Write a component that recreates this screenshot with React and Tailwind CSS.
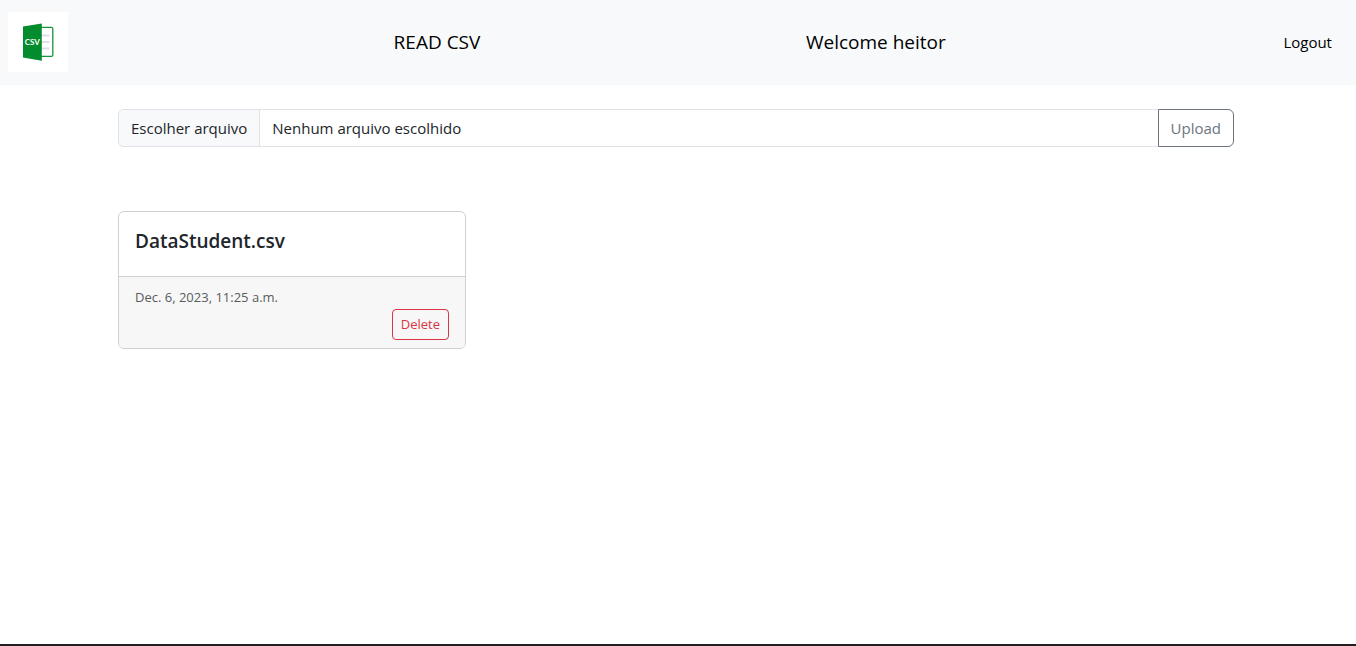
import { useState } from "react";

function CsvLogo() {
  return (
    <svg viewBox="0 0 60 60" className="h-15 w-15" role="img" aria-label="CSV">
      <rect width="60" height="60" fill="#fff" />
      <rect x="28" y="15.4" width="16.8" height="29" rx="1.4" fill="#fff" stroke="#159540" strokeWidth="1.3" />
      <g fill="#dedfe9">
        <rect x="33" y="22.5" width="8.4" height="2" />
        <rect x="33" y="29" width="8.4" height="2" />
        <rect x="33" y="35.5" width="8.4" height="2" />
      </g>
      <path d="M15 14.6 33.8 11.4V48.8L15 45.4Z" fill="#028c2e" />
      <text x="24.2" y="32.8" textAnchor="middle" fontFamily="Lato, sans-serif" fontSize="8" fontWeight="700" fill="#fff">
        CSV
      </text>
    </svg>
  );
}

function Header() {
  return (
    <header className="flex items-center justify-between bg-[#f8f9fb] pt-3 pr-3 pb-[13px] pl-2 text-black">
      <a href="#"><CsvLogo /></a>
      <h1 className="text-[19px]">READ CSV</h1>
      <p className="text-[19px]">Welcome heitor</p>
      <a href="#logout" className="px-3 text-[15px]">Logout</a>
    </header>
  );
}

function UploadForm() {
  const [name, setName] = useState("Nenhum arquivo escolhido");
  return (
    <form className="flex text-[15px]" onSubmit={(e) => e.preventDefault()}>
      <input
        id="csv-file"
        type="file"
        accept=".csv"
        className="sr-only"
        onChange={(e) => setName(e.target.files[0]?.name ?? "Nenhum arquivo escolhido")}
      />
      <label htmlFor="csv-file" className="flex h-[38px] flex-1 overflow-hidden rounded-l-md border border-r-0 border-[#dee2e6] leading-9">
        <span className="border-r border-[#dee2e6] bg-[#f8f9fb] px-3">Escolher arquivo</span>
        <span className="px-3">{name}</span>
      </label>
      <button type="submit" className="h-[38px] rounded-r-md border border-[#6c757d] px-3 text-[#6c757d]">
        Upload
      </button>
    </form>
  );
}

function FileCard({ name, date }) {
  return (
    <article className="overflow-hidden rounded-md border border-[#d0d0d0]">
      <div className="h-16 px-4 pt-4">
        <h2 className="text-[19px] leading-[26px] font-semibold">{name}</h2>
      </div>
      <div className="border-t border-[#d0d0d0] bg-[#f7f7f7] px-4 py-2">
        <p className="text-[13px] leading-6 text-[#595c5f]">{date}</p>
        <div className="flex justify-end">
          <button type="button" className="h-[31px] rounded-sm border border-[#dc3545] px-2 text-[13px] text-[#dc3545]">
            Delete
          </button>
        </div>
      </div>
    </article>
  );
}

export default function App() {
  return (
    <div className="flex min-h-screen flex-col border-b-2 border-[#231f20] bg-white font-['Open_Sans','Noto_Sans',sans-serif] text-[#212529]">
      <Header />
      <main className="flex-1 pt-6 pr-1">
        <div className="mx-auto max-w-[1116px]">
          <UploadForm />
          <section className="mt-16 grid grid-cols-3 gap-9">
            <FileCard name="DataStudent.csv" date="Dec. 6, 2023, 11:25 a.m." />
          </section>
        </div>
      </main>
    </div>
  );
}
